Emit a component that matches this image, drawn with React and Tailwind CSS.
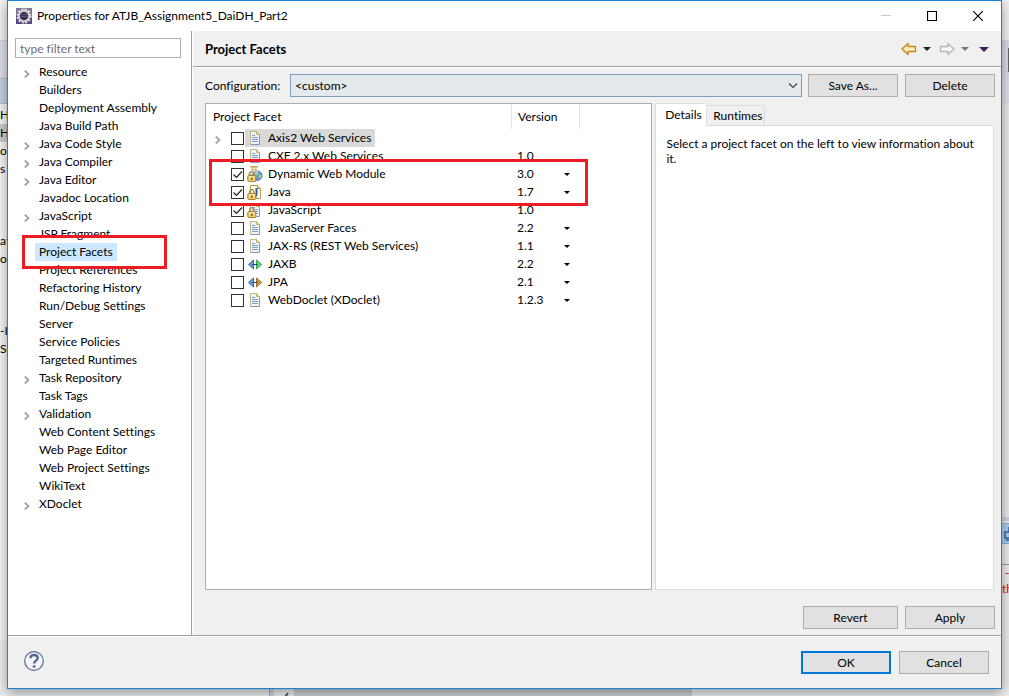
import React from "react";

const treeItems = [
  { name: "Resource", expandable: true },
  { name: "Builders" },
  { name: "Deployment Assembly" },
  { name: "Java Build Path" },
  { name: "Java Code Style", expandable: true },
  { name: "Java Compiler", expandable: true },
  { name: "Java Editor", expandable: true },
  { name: "Javadoc Location" },
  { name: "JavaScript", expandable: true },
  { name: "JSP Fragment" },
  { name: "Project Facets", selected: true },
  { name: "Project References" },
  { name: "Refactoring History" },
  { name: "Run/Debug Settings" },
  { name: "Server" },
  { name: "Service Policies" },
  { name: "Targeted Runtimes" },
  { name: "Task Repository", expandable: true },
  { name: "Task Tags" },
  { name: "Validation", expandable: true },
  { name: "Web Content Settings" },
  { name: "Web Page Editor" },
  { name: "Web Project Settings" },
  { name: "WikiText" },
  { name: "XDoclet", expandable: true },
];

const facets = [
  { name: "Axis2 Web Services", icon: "doc", expandable: true, selected: true },
  { name: "CXF 2.x Web Services", icon: "doc", version: "1.0" },
  { name: "Dynamic Web Module", icon: "web", version: "3.0", menu: true, checked: true, marked: true },
  { name: "Java", icon: "java", version: "1.7", menu: true, checked: true },
  { name: "JavaScript", icon: "lockedDoc", version: "1.0", checked: true },
  { name: "JavaServer Faces", icon: "doc", version: "2.2", menu: true },
  { name: "JAX-RS (REST Web Services)", icon: "doc", version: "1.1", menu: true },
  { name: "JAXB", icon: "jaxb", version: "2.2", menu: true },
  { name: "JPA", icon: "jpa", version: "2.1", menu: true },
  { name: "WebDoclet (XDoclet)", icon: "doc", version: "1.2.3", menu: true },
];

function Chevron() {
  return (
    <svg className="h-2 w-2 shrink-0" viewBox="0 0 8 8" fill="none" stroke="#a6a6a6" strokeWidth="1.9" aria-hidden="true">
      <path d="M.8 .5 4.4 4 .8 7.500" />
    </svg>
  );
}

function Caret({ color = "#000" }) {
  return (
    <svg className="h-1 w-2" viewBox="0 0 8 4" aria-hidden="true">
      <path d="M0 0h8L4 4z" fill={color} />
    </svg>
  );
}

function DocShape() {
  return (
    <>
      <path d="M3.5 1.5h6l3 3v10h-9z" fill="#eef4fd" stroke="#8496bb" />
      <path d="M3.5 14.5v-13h6" fill="none" stroke="#c5b681" />
      <path d="M9.5 1.5v3h3" fill="#f2df9e" stroke="#c9b067" />
      <path d="M5 5.5h3M5 7.5h6M5 9.5h6M5 11.5h6" stroke="#7c9bd0" />
    </>
  );
}

function Lock() {
  return (
    <>
      <path d="M2.7 10V8a2.1 2.3 0 0 1 4.2 0v2" fill="none" stroke="#b08a30" strokeWidth="1.3" />
      <rect x=".8" y="9.5" width="8" height="6" rx="1" fill="#efcf74" stroke="#a8802a" />
      <path d="M2 11h5.5" stroke="#fff3c4" />
      <path d="M4.8 11.5v2.5" stroke="#65470a" strokeWidth="1.2" />
    </>
  );
}

function FacetIcon({ kind }) {
  return (
    <svg className="h-4 w-4 shrink-0" viewBox="0 0 16 16" aria-hidden="true">
      {kind === "doc" && <DocShape />}
      {kind === "lockedDoc" && (
        <>
          <DocShape />
          <Lock />
        </>
      )}
      {kind === "web" && (
        <>
          <path d="M3 .8h8" stroke="#d9a93e" strokeWidth="1.6" />
          <path d="M5 1.500v3Q1.500 6 1.500 9h11Q12 6 9 4.500v-3z" fill="#eef0ea" stroke="#c9b88a" strokeWidth=".8" />
          <path d="M4.500 3.500h5" stroke="#d9a93e" />
          <circle cx="10.300" cy="9.700" r="4.800" fill="#6a97d4" stroke="#4169a5" strokeWidth=".8" />
          <path d="M8 7c2-2 4-1 3.500.5S9 9 8.500 10.500zM12 8.500l2.500.5-1 3.500-2-1z" fill="#9fd08c" />
          <path d="M7 7.500c1-1.500 2.500-2 4-2" stroke="#dcebfa" fill="none" />
          <Lock />
        </>
      )}
      {kind === "java" && (
        <>
          <path d="M3.500 1.500h7l3 3v10h-10z" fill="#fffdf4" stroke="#b5984a" />
          <path d="M10.500 1.500v3h3" fill="#efd892" stroke="#b5984a" />
          <path d="M9.500 4v6.500q0 1.500-1.500 1.500" fill="none" stroke="#2a5f9e" strokeWidth="2" />
          <Lock />
        </>
      )}
      {(kind === "jaxb" || kind === "jpa") && (
        <>
          <path d="M6.500 4v9L1.500 8.500z" fill="#6da0dc" stroke="#2e5c9b" strokeWidth=".9" />
          <path
            d="M9.500 4v9l5-4.500z"
            fill={kind === "jaxb" ? "#68d878" : "#dc9a40"}
            stroke={kind === "jaxb" ? "#24963a" : "#935a16"}
            strokeWidth=".9"
          />
          <path d="M5 8.500h6" stroke="#234f88" />
        </>
      )}
    </svg>
  );
}

function EclipseIcon() {
  return (
    <svg className="h-4 w-4 shrink-0" viewBox="0 0 16 16" aria-hidden="true">
      <rect width="16" height="16" fill="#5b4a82" />
      <rect width="16" height="5" fill="#83779f" />
      <circle cx="8" cy="8" r="6.500" fill="none" stroke="#ece9e4" strokeWidth="2" strokeDasharray="2 1.400" />
      <circle cx="8" cy="8" r="5.200" fill="#3a3550" stroke="#dedbd8" strokeWidth="1.800" />
      <path d="M4.500 6.500h7M4.500 8.500h7" stroke="#5c5678" />
    </svg>
  );
}

function NavArrow({ back }) {
  return (
    <svg className="h-4 w-4" viewBox="0 0 16 16" aria-hidden="true">
      {back ? (
        <path d="M1 8 7 2.500v3h7.500v5H7v3z" fill="#fdf0b4" stroke="#c08418" strokeWidth="1.300" strokeLinejoin="round" />
      ) : (
        <path d="M15 8 9 2.500v3H1.500v5H9v3z" fill="#f6f6f6" stroke="#b4b4b4" strokeWidth="1.300" strokeLinejoin="round" />
      )}
    </svg>
  );
}

function PushButton({ children, className = "w-[90px]", primary }) {
  return (
    <button
      type="button"
      className={`h-[23px] shrink-0 bg-[#e1e1e1] text-center leading-4 ${
        primary ? "border-2 border-[#0078d7]" : "border border-[#adadad]"
      } ${className}`}
    >
      {children}
    </button>
  );
}

function TitleBar() {
  return (
    <header className="flex h-[30px] shrink-0 items-center bg-white pl-2">
      <EclipseIcon />
      <h1 className="ml-[5px] flex-1">Properties for ATJB_Assignment5_DaiDH_Part2</h1>
      <button type="button" aria-label="Minimize" className="grid h-full w-[46px] place-items-center">
        <svg className="h-[10px] w-[10px]" viewBox="0 0 10 10" stroke="#c8c8c8"><path d="M0 4.500h10" /></svg>
      </button>
      <button type="button" aria-label="Maximize" className="grid h-full w-[46px] place-items-center">
        <svg className="h-[10px] w-[10px]" viewBox="0 0 10 10" fill="none" stroke="#000" strokeWidth="1.200"><path d="M.5.5h9v9h-9z" /></svg>
      </button>
      <button type="button" aria-label="Close" className="grid h-full w-[46px] place-items-center">
        <svg className="h-[10px] w-[10px]" viewBox="0 0 10 10" stroke="#000" strokeWidth="1.200"><path d="m0 0 10 10M10 0 0 10" /></svg>
      </button>
    </header>
  );
}

function Sidebar() {
  return (
    <nav aria-label="Property pages" className="w-[184px] shrink-0 border-r border-[#a0a0a0] bg-white pt-[7px]">
      <div className="pr-[10px] pl-[7px]">
        <input
          type="text"
          aria-label="Filter"
          placeholder="type filter text"
          className="block h-5 w-full border border-[#abadb3] bg-white px-1 placeholder:text-[#6d6d6d]"
        />
      </div>
      <ul className="mt-[5px]">
        {treeItems.map((item) => (
          <li key={item.name} className="relative flex h-[18px] items-center pl-4">
            <span className="flex w-[11px] pt-[3px]">{item.expandable && <Chevron />}</span>
            <a href="#" className={`px-1 leading-[18px] whitespace-nowrap ${item.selected ? "bg-[#cce8ff]" : ""}`}>
              {item.name}
            </a>
            {item.selected && (
              <span className="pointer-events-none absolute -top-2 left-[14px] z-10 h-[34px] w-[145px] border-3 border-[#ed1c24]" />
            )}
          </li>
        ))}
      </ul>
    </nav>
  );
}

function FacetTable() {
  return (
    <div className="min-w-0 flex-[446] border border-[#abadb3] bg-white">
      <table className="w-full table-fixed border-separate border-spacing-0 text-left">
        <colgroup>
          <col className="w-[306px]" />
          <col className="w-[68px]" />
          <col />
        </colgroup>
        <thead>
          <tr className="h-[25px]">
            <th className="border-r border-[#e5e5e5] p-0 pl-[7px] font-normal">Project Facet</th>
            <th className="border-r border-[#e5e5e5] p-0 pl-[6px] font-normal">Version</th>
            <td />
          </tr>
        </thead>
        <tbody>
          {facets.map((f, i) => (
            <tr key={f.name} className="h-[18px]">
              <td className="relative p-0">
                <div className="flex h-[18px] items-center pl-[9px]">
                  <span className="flex w-4 pt-[3px]">{f.expandable && <Chevron />}</span>
                  <span className="relative flex h-[13px] w-[13px]">
                    <input
                      id={`facet-${i}`}
                      type="checkbox"
                      defaultChecked={f.checked}
                      className="peer h-[13px] w-[13px] appearance-none border border-[#333] bg-white"
                    />
                    <svg
                      className="pointer-events-none absolute inset-0 hidden h-[13px] w-[13px] peer-checked:block"
                      viewBox="0 0 13 13"
                      fill="none"
                      stroke="#222"
                      strokeWidth="1.200"
                    >
                      <path d="m2.500 6.500 3 3 5.500-6" />
                    </svg>
                  </span>
                  <label
                    htmlFor={`facet-${i}`}
                    className={`ml-px flex h-[18px] items-center pr-1 pl-[2px] whitespace-nowrap ${f.selected ? "bg-[#d9d9d9]" : ""}`}
                  >
                    <FacetIcon kind={f.icon} />
                    <span className="ml-[5px]">{f.name}</span>
                  </label>
                </div>
                {f.marked && (
                  <span className="pointer-events-none absolute -top-[6px] left-[3px] z-10 h-[47px] w-[379px] border-3 border-[#ed1c24]" />
                )}
              </td>
              <td className="p-0 pl-[5px]">
                <div className="flex items-center justify-between pr-[10px]">
                  <span>{f.version}</span>
                  {f.menu && (
                    <button type="button" aria-label={`Change version of ${f.name}`} className="grid h-4 place-items-center">
                      <svg className="h-[3px] w-[6px]" viewBox="0 0 6 3"><path d="M0 0h6L3 3z" /></svg>
                    </button>
                  )}
                </div>
              </td>
              <td />
            </tr>
          ))}
        </tbody>
      </table>
    </div>
  );
}

function DetailsPanel() {
  return (
    <section className="flex min-w-0 flex-[339] flex-col">
      <div role="tablist" className="flex h-[23px] items-end">
        <button type="button" role="tab" aria-selected="true" className="h-[23px] w-[51px] border-t border-l border-[#dcdcdc] bg-white pl-1">
          Details
        </button>
        <div className="flex h-full flex-1 items-end border-b border-[#dcdcdc]">
          <button type="button" role="tab" aria-selected="false" className="h-5 w-[59px] border-t border-r border-l border-[#dcdcdc] pl-1">
            Runtimes
          </button>
        </div>
      </div>
      <div role="tabpanel" className="flex-1 border-r border-b border-l border-[#dcdcdc] bg-white py-[10px] pr-2 pl-[10px] leading-[15px]">
        Select a project facet on the left to view information about it.
      </div>
    </section>
  );
}

function LeftBackdrop() {
  return (
    <div aria-hidden="true" className="flex w-[7px] shrink-0 flex-col overflow-hidden bg-[#f0f0f0] leading-[18px] whitespace-nowrap">
      <div className="h-[41px] border-b border-[#d4d4d4] bg-[#f3f3f3]" />
      <div className="h-[37px] bg-[#dfe1ec]" />
      <div className="h-[26px] border-y border-[#b4bccb] bg-[#c5d3e5]" />
      <div className="flex h-[536px] flex-col bg-[#f7f7f7] pt-[2px]">
        <span>H</span>
        <span className="bg-[#cfcfcf]">H</span>
        <span>o</span>
        <span>s</span>
        <span className="mt-[54px]">at</span>
        <span>or</span>
        <span className="mt-[54px]">-I</span>
        <span>Su</span>
      </div>
    </div>
  );
}

function RightBackdrop() {
  return (
    <div aria-hidden="true" className="flex w-[7px] shrink-0 flex-col overflow-hidden bg-[#ececec] whitespace-nowrap">
      <div className="h-[42px] border-b-2 border-[#dcdcdc] bg-[#f3f3f3]" />
      <div className="flex h-9 justify-end bg-[#d9deec] py-[6px]">
        <div className="w-px bg-[#666]" />
      </div>
      <div className="h-[25px] bg-[#e0e1ea]" />
      <div className="h-[414px] bg-[#ebebeb]" />
      <div className="h-1 bg-[#ccd0e3]" />
      <div className="mt-[2px] h-[21px] border-y border-[#86b4dc] bg-[#a9cdee]">
        <svg className="h-[19px] w-[7px]" viewBox="0 0 7 19" fill="none" stroke="#3565a6" strokeWidth="1.500">
          <path d="M7 3v5H3v6h4M4 16h3" />
        </svg>
      </div>
      <div className="mt-5 border-t border-[#999] pl-[3px] leading-4 text-[#f00]">-</div>
      <div className="leading-4 text-[#f00]">th</div>
    </div>
  );
}

export default function App() {
  return (
    <div className="flex min-h-screen flex-col overflow-hidden bg-[#f0f0f0] font-['Lato','Open_Sans',sans-serif] text-[12px] leading-4 text-black [font-variant-ligatures:none]">
      <div className="flex flex-1">
        <LeftBackdrop />
        <main className="relative z-10 flex min-w-0 flex-1 flex-col border border-[#1883d7] bg-[#f0f0f0] shadow-[0_3px_12px_rgba(0,0,0,0.4)]">
          <TitleBar />
          <div className="flex flex-1">
            <Sidebar />
            <div className="flex min-w-0 flex-1 flex-col border-l border-white">
              <div className="flex h-9 items-center border-b border-[#a0a0a0] px-3 pt-px">
                <h2 className="flex-1 text-[13px] font-bold">Project Facets</h2>
                <div className="flex items-center gap-[6px]">
                  <button type="button" aria-label="Back"><NavArrow back /></button>
                  <button type="button" aria-label="Back history" className="grid h-4 place-items-center"><Caret color="#222" /></button>
                  <button type="button" aria-label="Forward" className="ml-[2px]"><NavArrow /></button>
                  <button type="button" aria-label="Forward history" className="grid h-4 place-items-center"><Caret color="#777" /></button>
                  <button type="button" aria-label="View menu" className="ml-1 grid h-4 place-items-center">
                    <svg className="h-[5px] w-[10px]" viewBox="0 0 10 5"><path d="M0 0h10L5 5z" fill="#3a1d5c" /></svg>
                  </button>
                </div>
              </div>
              <div className="flex flex-1 flex-col border-t border-white pt-[6px] pr-[6px] pb-[6px] pl-3">
                <div className="flex items-center">
                  <label htmlFor="configuration" className="w-[85px] shrink-0">Configuration:</label>
                  <div className="relative min-w-0 flex-1">
                    <select
                      id="configuration"
                      className="block h-[23px] w-full appearance-none border border-[#7a9fc0] bg-[#e3e9ed] pl-1"
                    >
                      <option>&lt;custom&gt;</option>
                    </select>
                    <svg className="pointer-events-none absolute top-[9px] right-1 h-[6px] w-[10px]" viewBox="0 0 10 6" fill="none" stroke="#444" strokeWidth="1.200">
                      <path d="m1 .5 4 4 4-4" />
                    </svg>
                  </div>
                  <div className="ml-[6px] flex gap-[7px]">
                    <PushButton>Save As...</PushButton>
                    <PushButton>Delete</PushButton>
                  </div>
                </div>
                <div className="mt-[6px] mr-px flex flex-1 gap-[3px]">
                  <FacetTable />
                  <DetailsPanel />
                </div>
                <div className="mt-4 flex justify-end gap-[7px]">
                  <PushButton className="w-[95px]">Revert</PushButton>
                  <PushButton>Apply</PushButton>
                </div>
              </div>
            </div>
          </div>
          <footer className="border-t border-[#a0a0a0]">
            <div className="flex h-[52px] items-center border-t border-white pr-3 pl-4">
              <button type="button" aria-label="Help" className="mr-auto pb-[3px]">
                <svg className="h-5 w-5" viewBox="0 0 20 20" fill="none" stroke="#566a94">
                  <circle cx="10" cy="10" r="9.300" fill="#f4f5f8" strokeWidth="1.200" />
                  <path d="M6.500 7.300C6.600 5 8.200 4 10.100 4c2 0 3.600 1.100 3.600 3 0 2.500-3.600 2.700-3.600 5.400" strokeWidth="2.400" />
                  <path d="M10.100 14.300v2.400" strokeWidth="2.600" />
                </svg>
              </button>
              <div className="flex gap-2">
                <PushButton primary>OK</PushButton>
                <PushButton>Cancel</PushButton>
              </div>
            </div>
          </footer>
        </main>
        <RightBackdrop />
      </div>
      <div aria-hidden="true" className="flex h-[7px] bg-[#ececec]">
        <div className="w-[269px] rounded-bl-lg" />
        <div className="w-[5px] border-l border-[#aaa] bg-[#ccd0e3]" />
        <svg className="ml-[9px] h-[7px] w-[11px]" viewBox="0 0 11 7" fill="none" stroke="#555" strokeWidth="2"><path d="M5 4 2 8" /></svg>
        <div className="w-[398px] bg-[#cdcdcd]" />
      </div>
    </div>
  );
}
